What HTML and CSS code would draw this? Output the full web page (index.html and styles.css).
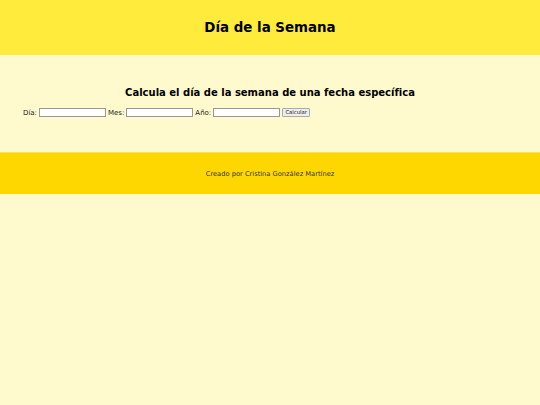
FILE: index.html
```html
<!DOCTYPE html>
<html lang="es">
<head>
<meta charset="utf-8">
<title>Día de la Semana</title>
<link rel="stylesheet" href="styles.css">
</head>
<body>
<header class="top">
  <h1 class="title">Día de la Semana</h1>
</header>
<main class="main">
  <h2 class="subtitle">Calcula el día de la semana de una fecha específica</h2>
  <form class="form">
    <label class="lbl">Día:</label>
    <input class="field" type="text">
    <label class="lbl">Mes:</label>
    <input class="field" type="text">
    <label class="lbl">Año:</label>
    <input class="field" type="text">
    <button class="btn" type="button">Calcular</button>
  </form>
</main>
<footer class="foot">
  <p class="credit">Creado por Cristina González Martínez</p>
</footer>
</body>
</html>
```
FILE: styles.css
```css
html, body {
  margin: 0;
  padding: 0;
  background: #fffacd;
  font-family: "DejaVu Sans", Verdana, sans-serif;
  color: #000;
}
.top {
  background: #ffeb3b;
  height: 55px;
  display: flex;
  align-items: center;
  justify-content: center;
}
.title {
  margin: 0;
  font-size: 13.4px;
  font-weight: bold;
}
.main {
  height: 97px;
  box-sizing: border-box;
  padding: 32px 23px 0;
}
.subtitle {
  margin: 0 0 10px;
  text-align: center;
  font-size: 10px;
  font-weight: bold;
}
.form {
  display: flex;
  align-items: center;
  font-size: 7px;
  color: #222;
}
.lbl {
  margin-right: 2px;
}
.field {
  width: 67px;
  height: 9px;
  box-sizing: border-box;
  border: 1px solid #999;
  background: #fff;
  padding: 0;
  margin: 0 2px 0 0;
}
.btn {
  font-family: "DejaVu Sans", Verdana, sans-serif;
  font-size: 5.3px;
  width: 28px;
  height: 9px;
  padding: 0;
  margin-left: 0;
  border: 1px solid #aaa;
  border-radius: 1px;
  background: #eee;
  color: #222;
  line-height: 1;
}
.foot {
  background: #ffd700;
  border-top: 1px solid #ffe44d;
  height: 41px;
  display: flex;
  align-items: center;
  justify-content: center;
}
.credit {
  margin: 0;
  font-size: 6.7px;
  color: #333;
}
```
